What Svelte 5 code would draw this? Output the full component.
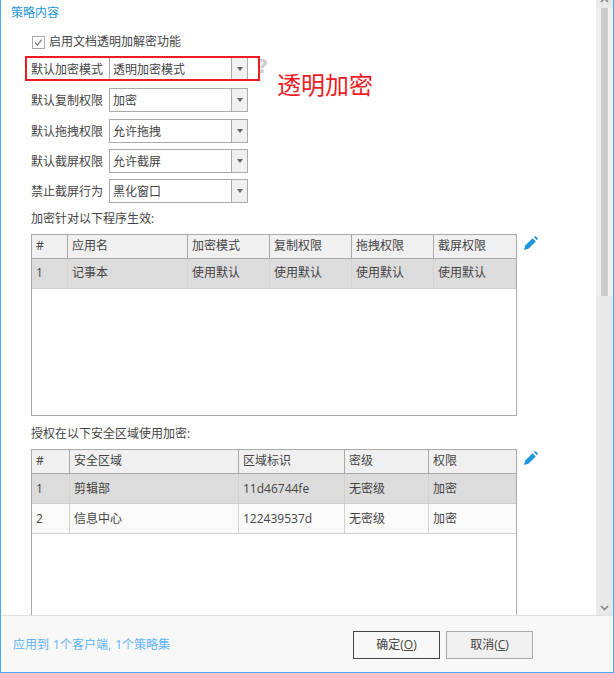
<script>
  const selects = [
    { label: '默认加密模式', value: '透明加密模式' },
    { label: '默认复制权限', value: '加密' },
    { label: '默认拖拽权限', value: '允许拖拽' },
    { label: '默认截屏权限', value: '允许截屏' },
    { label: '禁止截屏行为', value: '黑化窗口' }
  ];
  const appHead = ['#', '应用名', '加密模式', '复制权限', '拖拽权限', '截屏权限'];
  const appRows = [['1', '记事本', '使用默认', '使用默认', '使用默认', '使用默认']];
  const zoneHead = ['#', '安全区域', '区域标识', '密级', '权限'];
  const zoneRows = [
    ['1', '剪辑部', '11d46744fe', '无密级', '加密'],
    ['2', '信息中心', '122439537d', '无密级', '加密']
  ];
</script>

{#snippet pencil()}
  <svg class="pencil" viewBox="0 0 14 14" aria-hidden="true">
    <path d="M0 14 L1.2 9.6 L8.6 2.2 L11.8 5.4 L4.4 12.8 Z" fill="#1f97dc" />
    <path d="M9.7 1.1 L10.3 .5 Q11 0 11.8 .4 L13.5 2.1 Q14 2.9 13.4 3.7 L12.9 4.3 Z" fill="#1f97dc" />
  </svg>
{/snippet}

{#snippet grid(cls, head, rows)}
  <div class="table {cls}">
    <div class="tr head">
      {#each head as h}<div class="td">{h}</div>{/each}
    </div>
    {#each rows as row, i}
      <div class="tr" class:selected={i === 0} class:plain={i !== 0}>
        {#each row as c}<div class="td">{c}</div>{/each}
      </div>
    {/each}
  </div>
{/snippet}

<div class="window">
  <div class="body">
    <main class="content">
      <h2 class="title">策略内容</h2>
      <label class="check">
        <span class="box">
          <svg viewBox="0 0 13 13" aria-hidden="true"><path d="M2.5 6.8 L5.2 9.6 L10.4 3" fill="none" stroke="#777" stroke-width="1.3" /></svg>
        </span>
        启用文档透明加解密功能
      </label>
      <div class="selects">
        {#each selects as s}
          <div class="row">
            <span class="lbl">{s.label}</span>
            <div class="combo">
              <span class="val">{s.value}</span>
              <span class="btn"><i class="arrow"></i></span>
            </div>
          </div>
        {/each}
      </div>
      <p class="caption first">加密针对以下程序生效:</p>
      <div class="tablerow">
        {@render grid('apps', appHead, appRows)}
        {@render pencil()}
      </div>
      <p class="caption second">授权在以下安全区域使用加密:</p>
      <div class="tablerow">
        {@render grid('zones', zoneHead, zoneRows)}
        {@render pencil()}
      </div>

      <span class="help">?</span>
      <div class="redbox"></div>
      <span class="note">透明加密</span>
    </main>
    <div class="scrollbar">
      <svg class="chev up" viewBox="0 0 9 6" aria-hidden="true"><path d="M1 5 L4.5 1.5 L8 5" fill="none" stroke="#888" stroke-width="1.6" /></svg>
      <div class="thumb"></div>
      <div class="rest"></div>
      <svg class="chev down" viewBox="0 0 9 6" aria-hidden="true"><path d="M1 1 L4.5 4.5 L8 1" fill="none" stroke="#888" stroke-width="1.6" /></svg>
    </div>
  </div>
  <footer class="footer">
    <span class="apply">应用到 1个客户端, 1个策略集</span>
    <div class="actions">
      <button class="action primary">确定(<u>O</u>)</button>
      <button class="action">取消(<u>C</u>)</button>
    </div>
  </footer>
</div>

<style>
  :global(body) {
    margin: 0;
    background: #fff;
  }
  .window {
    box-sizing: border-box;
    width: 614px;
    height: 673px;
    display: flex;
    flex-direction: column;
    border: 1px solid #4aa8f5;
    border-top: 0;
    font: 12px/16px "Open Sans", "Noto Sans CJK SC", sans-serif;
    color: #444;
    background: #fff;
    overflow: hidden;
  }
  .body {
    flex: 1;
    min-height: 0;
    display: flex;
  }
  .content {
    position: relative;
    flex: 1;
    min-width: 0;
    overflow: hidden;
    padding: 5px 0 0 30px;
  }
  .title {
    margin: 0 0 0 -20px;
    font: inherit;
    color: #2196d8;
  }
  .check {
    display: flex;
    align-items: center;
    gap: 4px;
    margin: 13px 0 0 1px;
  }
  .box {
    box-sizing: border-box;
    width: 13px;
    height: 13px;
    border: 1px solid #aaa;
    display: flex;
  }
  .box svg {
    width: 11px;
    height: 11px;
  }
  .selects {
    display: flex;
    flex-direction: column;
    gap: 6px;
    margin-top: 7px;
  }
  .row {
    display: flex;
    align-items: center;
    height: 24px;
  }
  .row:nth-child(-n+2) {
    margin-bottom: 1px;
  }
  .lbl {
    width: 78px;
    padding-top: 2px;
  }
  .combo {
    box-sizing: border-box;
    width: 139px;
    height: 24px;
    border: 1px solid #aaa;
    display: flex;
    align-items: center;
  }
  .val {
    flex: 1;
    padding: 2px 0 0 3px;
  }
  .btn {
    box-sizing: border-box;
    width: 16px;
    height: 100%;
    background: #f0f0f0;
    border-left: 1px solid #aaa;
    display: flex;
    align-items: center;
    justify-content: center;
  }
  .arrow {
    width: 0;
    height: 0;
    border-left: 3.5px solid transparent;
    border-right: 3.5px solid transparent;
    border-top: 4px solid #666;
  }
  .caption {
    margin: 0;
  }
  .caption.first {
    margin-top: 8px;
  }
  .caption.second {
    margin-top: 10px;
  }
  .tablerow {
    display: flex;
    align-items: flex-start;
    margin-top: 7px;
  }
  .table {
    box-sizing: border-box;
    width: 486px;
    flex: none;
    border: 1px solid #aaa;
    background: #fff;
  }
  .apps {
    height: 182px;
    --cols: 36px 120px 82px 82px 82px 1fr;
  }
  .zones {
    height: 260px;
    --cols: 38px 169px 106px 84px 1fr;
  }
  .tr {
    display: grid;
    grid-template-columns: var(--cols);
    box-sizing: border-box;
    height: 30px;
    border-bottom: 1px solid #cfcfcf;
  }
  .tr.head {
    height: 24px;
    background: #f0f0f0;
    border-bottom-color: #aaa;
  }
  .tr.selected {
    background: #dcdcdc;
  }
  .tr.plain {
    background: #fafafa;
  }
  .td {
    padding: 0 0 1px 4px;
    display: flex;
    align-items: center;
    border-right: 1px solid #d4d4d4;
    white-space: nowrap;
    overflow: hidden;
  }
  .zones .td {
    padding-bottom: 0;
  }
  .zones .head .td {
    padding-bottom: 2px;
  }
  .head .td {
    border-right-color: #aaa;
  }
  .selected .td {
    border-right-color: #d2d2d2;
  }
  .td:last-child {
    border-right: 0;
  }
  .pencil {
    width: 14px;
    height: 14px;
    flex: none;
    margin: 2px 0 0 7px;
  }
  .redbox {
    position: absolute;
    left: 24px;
    top: 56px;
    width: 235px;
    height: 25px;
    box-sizing: border-box;
    border: 2px solid #ed1c24;
  }
  .help {
    position: absolute;
    left: 256px;
    top: 57px;
    font: bold 19px/19px "DejaVu Sans", sans-serif;
    color: #ccc;
  }
  .note {
    position: absolute;
    left: 276px;
    top: 68px;
    font-size: 24px;
    line-height: 34px;
    color: #ed1c24;
  }
  .scrollbar {
    position: relative;
    flex: none;
    width: 17px;
    display: flex;
    flex-direction: column;
    align-items: center;
    background: #e9e9e9;
  }
  .thumb {
    position: absolute;
    top: 8px;
    left: 0;
    width: 17px;
    height: 288px;
    background: #f0f0f0;
  }
  .thumb::before {
    content: "";
    display: block;
    width: 7px;
    height: 100%;
    margin-left: 5px;
    background: #cdcdcd;
  }
  .rest {
    flex: 1;
  }
  .chev {
    position: relative;
    width: 9px;
    height: 6px;
    flex: none;
  }
  .chev.up {
    margin-top: -3px;
  }
  .chev.down {
    margin-bottom: 4px;
  }
  .footer {
    box-sizing: border-box;
    flex: none;
    height: 57px;
    border-top: 1px solid #e2e2e2;
    background: #f8f8f8;
    display: flex;
    align-items: center;
    justify-content: space-between;
    padding: 2px 80px 0 12px;
  }
  .apply {
    color: #5fb3f5;
    word-spacing: 1px;
  }
  .actions {
    display: flex;
    gap: 6px;
  }
  .action {
    box-sizing: border-box;
    width: 87px;
    height: 28px;
    border: 1px solid #aaa;
    background: #f0f0f0;
    color: #444;
    font: inherit;
    padding: 0;
  }
  .action.primary {
    border-color: #444;
    background: #f8f8f8;
  }
</style>
